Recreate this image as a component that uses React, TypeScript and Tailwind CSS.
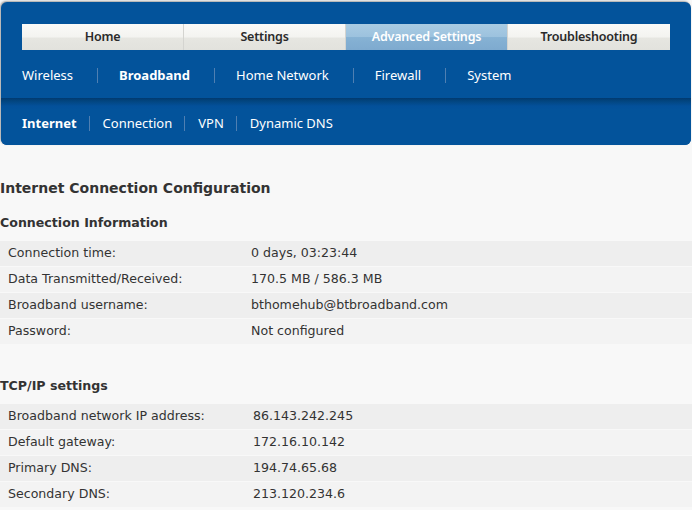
import React from "react";

const tabs = ["Home", "Settings", "Advanced Settings", "Troubleshooting"];
const nav = ["Wireless", "Broadband", "Home Network", "Firewall", "System"];
const sub = ["Internet", "Connection", "VPN", "Dynamic DNS"];

const info = [
  ["Connection time:", "0 days, 03:23:44"],
  ["Data Transmitted/Received:", "170.5 MB / 586.3 MB"],
  ["Broadband username:", "bthomehub@btbroadband.com"],
  ["Password:", "Not configured"],
];
const tcp = [
  ["Broadband network IP address:", "86.143.242.245"],
  ["Default gateway:", "172.16.10.142"],
  ["Primary DNS:", "194.74.65.68"],
  ["Secondary DNS:", "213.120.234.6"],
];

function Table({ rows, valX }: { rows: string[][]; valX: string }) {
  return (
    <div className="flex flex-col gap-[1px]">
      {rows.map((r, i) => (
        <div
          key={i}
          className={`flex h-[25px] items-center ${i % 2 === 0 ? "bg-[#eeeeee]" : "bg-[#f3f3f3]"}`}
        >
          <div className={`pl-[8px] ${valX}`}>{r[0]}</div>
          <div>{r[1]}</div>
        </div>
      ))}
    </div>
  );
}

export default function App() {
  return (
    <div
      className="w-[692px] h-[510px] overflow-hidden bg-[#f8f8f8] text-[#333333]"
      style={{ fontFamily: '"DejaVu Sans", Verdana, sans-serif' }}
    >
      <div className="pt-[2px] pl-[1px]">
        <div className="w-[690px] h-[143px] rounded-[6px] bg-[#03539b] shadow-[-1px_-1px_2px_rgba(0,0,0,0.35)] flex flex-col overflow-hidden">
          <div className="pt-[22px] pl-[21px] flex">
            {tabs.map((t, i) => (
              <div
                key={t}
                className={`h-[26px] flex items-center justify-center text-[12.5px] font-semibold ${
                  i < 3 ? "w-[162px] border-r border-[#d4d4d0]" : "w-[162px]"
                } ${
                  i === 2
                    ? "bg-[linear-gradient(#a9cbe3_0%,#9cc2de_50%,#86b2d4_52%,#7eaacf_100%)] text-white border-[#7ea6c6]"
                    : "bg-[linear-gradient(#fafaf8_0%,#f3f3f0_50%,#e6e6e1_54%,#e2e2dd_100%)] text-[#2a2a2a]"
                }`}
                style={{ fontFamily: '"Noto Sans", sans-serif', letterSpacing: "-0.2px" }}
              >
                {t}
              </div>
            ))}
          </div>
          <div
            className="h-[48px] flex items-center pl-[21px] pt-[3px] text-[13px] text-white"
            style={{ fontFamily: '"Noto Sans", sans-serif' }}
          >
            {nav.map((n, i) => (
              <React.Fragment key={n}>
                {i > 0 && <div className="w-px h-[15px] bg-[#4f7fb2] ml-[24px] mr-[21px]" />}
                <span className={i === 1 ? "font-bold" : ""}>{n}</span>
              </React.Fragment>
            ))}
          </div>
          <div className="flex-1 bg-[linear-gradient(#013a70_0px,#02457f_3px,#03509a_8px,#03539b_12px)] flex items-center pl-[21px] pt-[4px] text-[13px] text-white"
            style={{ fontFamily: '"Noto Sans", sans-serif' }}
          >
            {sub.map((n, i) => (
              <React.Fragment key={n}>
                {i > 0 && <div className="w-px h-[15px] bg-[#4f7fb2] ml-[12px] mr-[13px]" />}
                <span className={i === 0 ? "font-bold" : ""}>{n}</span>
              </React.Fragment>
            ))}
          </div>
        </div>
      </div>

      <div className="text-[12.6px]">
        <div className="mt-[34px] text-[14px] font-bold leading-[18px]">Internet Connection Configuration</div>
        <div className="mt-[18px] text-[12.6px] font-bold leading-[16px]">Connection Information</div>
        <div className="mt-[10px]">
          <Table rows={info} valX="w-[251px]" />
        </div>
        <div className="mt-[34px] text-[12.6px] font-bold leading-[16px]">TCP/IP settings</div>
        <div className="mt-[10px]">
          <Table rows={tcp} valX="w-[253px]" />
        </div>
      </div>
    </div>
  );
}
